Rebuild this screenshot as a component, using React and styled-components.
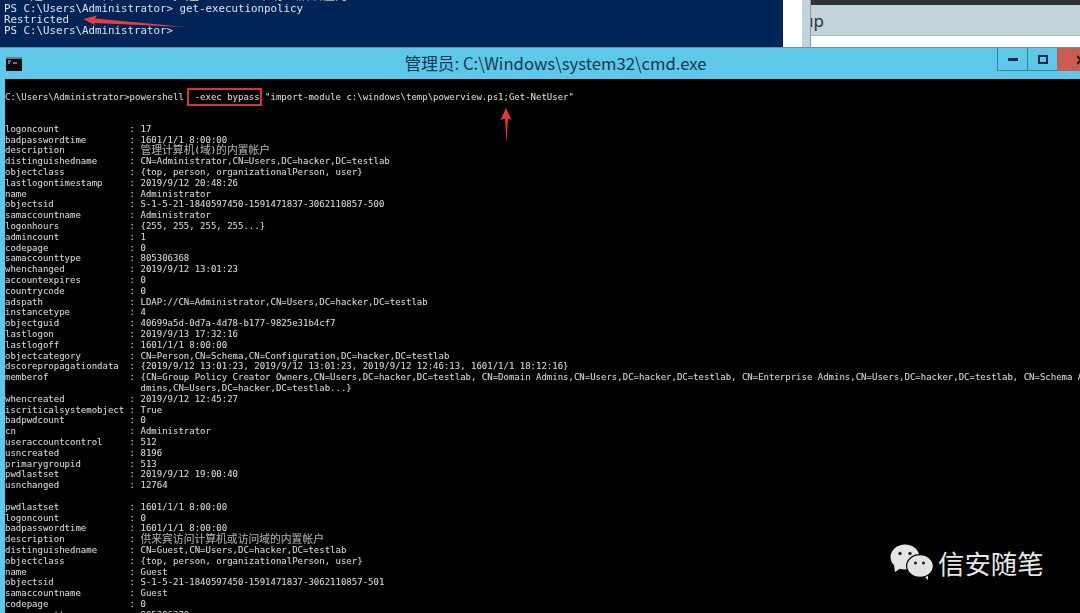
import styled, { createGlobalStyle } from "styled-components";

const GlobalStyle = createGlobalStyle`
	html, body {
		margin: 0;
		padding: 0;
		background: #000;
	}
`;

const ADMIN_GROUPS =
	"{CN=Group Policy Creator Owners,CN=Users,DC=hacker,DC=testlab, CN=Domain Admins,CN=Users,DC=hacker,DC=testlab, CN=Enterprise Admins,CN=Users,DC=hacker,DC=testlab, CN=Schema A";

const adminProps = [
	["logoncount", "17"],
	["badpasswordtime", "1601/1/1 8:00:00"],
	["description", "管理计算机(域)的内置帐户"],
	["distinguishedname", "CN=Administrator,CN=Users,DC=hacker,DC=testlab"],
	["objectclass", "{top, person, organizationalPerson, user}"],
	["lastlogontimestamp", "2019/9/12 20:48:26"],
	["name", "Administrator"],
	["objectsid", "S-1-5-21-1840597450-1591471837-3062110857-500"],
	["samaccountname", "Administrator"],
	["logonhours", "{255, 255, 255, 255...}"],
	["admincount", "1"],
	["codepage", "0"],
	["samaccounttype", "805306368"],
	["whenchanged", "2019/9/12 13:01:23"],
	["accountexpires", "0"],
	["countrycode", "0"],
	["adspath", "LDAP://CN=Administrator,CN=Users,DC=hacker,DC=testlab"],
	["instancetype", "4"],
	["objectguid", "40699a5d-0d7a-4d78-b177-9825e31b4cf7"],
	["lastlogon", "2019/9/13 17:32:16"],
	["lastlogoff", "1601/1/1 8:00:00"],
	["objectcategory", "CN=Person,CN=Schema,CN=Configuration,DC=hacker,DC=testlab"],
	["dscorepropagationdata", "{2019/9/12 13:01:23, 2019/9/12 13:01:23, 2019/9/12 12:46:13, 1601/1/1 18:12:16}"],
	["memberof", ADMIN_GROUPS],
	["", "dmins,CN=Users,DC=hacker,DC=testlab...}"],
	["whencreated", "2019/9/12 12:45:27"],
	["iscriticalsystemobject", "True"],
	["badpwdcount", "0"],
	["cn", "Administrator"],
	["useraccountcontrol", "512"],
	["usncreated", "8196"],
	["primarygroupid", "513"],
	["pwdlastset", "2019/9/12 19:00:40"],
	["usnchanged", "12764"],
];

const guestProps = [
	["pwdlastset", "1601/1/1 8:00:00"],
	["logoncount", "0"],
	["badpasswordtime", "1601/1/1 8:00:00"],
	["description", "供来宾访问计算机或访问域的内置帐户"],
	["distinguishedname", "CN=Guest,CN=Users,DC=hacker,DC=testlab"],
	["objectclass", "{top, person, organizationalPerson, user}"],
	["name", "Guest"],
	["objectsid", "S-1-5-21-1840597450-1591471837-3062110857-501"],
	["samaccountname", "Guest"],
	["codepage", "0"],
	["samaccounttype", "805306370"],
];

// console cells: a CJK glyph takes exactly two columns
function ConsoleText({ text }) {
	return text
		.split(/([\u4e00-\u9fff]+)/)
		.map((part, i) => (i % 2 ? <Cjk key={i}>{part}</Cjk> : part));
}

function PropBlock({ rows }) {
	return (
		<PropList>
			{rows.map(([key, value], i) => (
				<Line key={i}>
					{(key ? key.padEnd(23) + ": " : " ".repeat(25))}
					<ConsoleText text={value} />
				</Line>
			))}
		</PropList>
	);
}

function CmdIcon() {
	return (
		<svg width="16" height="14" viewBox="0 0 16 14">
			<rect width="16" height="14" fill="#0b0b0b" />
			<rect y="0" width="16" height="2" fill="#6d7d86" />
			<path d="M2 4h3M2 6h2M7 6h4" stroke="#d8d8d8" strokeWidth="1" />
		</svg>
	);
}

function WeChatLogo() {
	return (
		<svg width="44" height="38" viewBox="0 0 44 38">
			<path d="M4 21 L5 28 L11 24 Z" fill="#e4e4e4" />
			<ellipse cx="15" cy="13" rx="14.5" ry="12.5" fill="#e4e4e4" />
			<circle cx="10" cy="9.5" r="1.7" fill="#222" />
			<circle cx="20" cy="9.5" r="1.7" fill="#222" />
			<path d="M33 31 L38 36 L38 28 Z" fill="#e4e4e4" />
			<ellipse cx="30" cy="22" rx="13.4" ry="11.4" fill="#e4e4e4" stroke="#000" strokeWidth="1.2" />
			<circle cx="25.5" cy="19" r="1.5" fill="#222" />
			<circle cx="33.5" cy="19" r="1.5" fill="#222" />
		</svg>
	);
}

export default function App() {
	return (
		<Page>
			<GlobalStyle />
			<TopStrip>
				<PsPane>
					<PsLine $warn>
						<ConsoleText text={'[Y] 是(Y)  [N] 否(N)  [S] 挂起(S)  [?] 帮助 (默认值为"N"):'} />
					</PsLine>
					<PsLine>PS C:\Users\Administrator&gt; get-executionpolicy</PsLine>
					<PsLine>Restricted</PsLine>
					<PsLine>PS C:\Users\Administrator&gt;</PsLine>
				</PsPane>
				<WhiteGap />
				<SideEdge />
				<BackWindow>
					<BackTitle />
					<BackTab>
						<BackTabText>up</BackTabText>
					</BackTab>
					<BackBody />
				</BackWindow>
			</TopStrip>

			<CmdWindow>
				<TitleBar>
					<CmdIcon />
					<Title>管理员: C:\Windows\system32\cmd.exe</Title>
					<WinButtons>
						<WinButton>
							<svg width="10" height="4" viewBox="0 0 10 4">
								<rect width="10" height="3" y="1" fill="#0c2c44" />
							</svg>
						</WinButton>
						<WinButton>
							<svg width="10" height="9" viewBox="0 0 10 9">
								<rect x="1" y="1" width="8" height="7" fill="none" stroke="#0c2c44" strokeWidth="2" />
							</svg>
						</WinButton>
						<CloseButton>
							<svg width="3" height="10" viewBox="0 0 3 10">
								<path d="M0 1 L8 9 M8 1 L0 9" stroke="#2a1512" strokeWidth="2" />
							</svg>
						</CloseButton>
					</WinButtons>
				</TitleBar>
				<Console>
					<Line>
						C:\Users\Administrator&gt;powershell  <Marked>-exec bypass</Marked> "import-module c:\windows\temp\powerview.ps1;Get-NetUser"
					</Line>
					<Line />
					<Line />
					<PropBlock rows={adminProps} />
					<Line />
					<PropBlock rows={guestProps} />
				</Console>
			</CmdWindow>

			<Arrows viewBox="0 0 1080 613">
				<polygon points="83,19 97,15.5 95,18.5 186,27 94,23 96,25.5" fill="#e5403b" />
				<polygon points="506,108 511.5,120 508,118.5 506.5,143 505,118.5 500.5,120" fill="#e5353c" />
			</Arrows>

			<Watermark>
				<WeChatLogo />
				<WatermarkText>信安随笔</WatermarkText>
			</Watermark>
		</Page>
	);
}

const Page = styled.div`
	position: relative;
	width: 1080px;
	height: 613px;
	overflow: hidden;
	display: flex;
	flex-direction: column;
`;

const TopStrip = styled.div`
	height: 47px;
	display: flex;
	flex-shrink: 0;
`;

const PsPane = styled.div`
	width: 783px;
	height: 47px;
	background: #012456;
	overflow: hidden;
	display: flex;
	flex-direction: column;
	justify-content: flex-end;
	padding: 0 0 11px 4px;
	box-sizing: border-box;
	filter: blur(0.35px);
`;

const PsLine = styled.div`
	font-family: "DejaVu Sans Mono", "Noto Sans CJK SC", monospace;
	font-size: 10.8px;
	line-height: 11px;
	height: 11px;
	margin-bottom: ${(p) => (p.$warn ? "3px" : "0")};
	white-space: pre;
	flex-shrink: 0;
	color: ${(p) => (p.$warn ? "#e8e6b0" : "#dce4ea")};
`;

const WhiteGap = styled.div`
	width: 19px;
	background: #fff;
`;

const SideEdge = styled.div`
	width: 8px;
	background: #c3d3da;
`;

const BackWindow = styled.div`
	flex: 1;
	display: flex;
	flex-direction: column;
	border-left: 1px solid #8b9aa2;
`;

const BackTitle = styled.div`
	height: 5px;
	background: #333;
`;

const BackTab = styled.div`
	height: 30px;
	background: #c3d3da;
	border-bottom: 1px solid #aebbc1;
	overflow: hidden;
`;

const BackTabText = styled.div`
	margin-left: -8px;
	font-family: "Noto Sans", sans-serif;
	font-size: 17px;
	line-height: 31px;
	color: #2c3438;
`;

const BackBody = styled.div`
	flex: 1;
	background: #fff;
`;

const CmdWindow = styled.div`
	flex: 1;
	min-height: 0;
	display: flex;
	flex-direction: column;
	background: #5ec8ea;
	border-top: 1px solid #6c8fa3;
`;

const TitleBar = styled.div`
	height: 31px;
	flex-shrink: 0;
	display: flex;
	align-items: flex-start;
	padding-left: 6px;
	& > svg {
		margin-top: 9px;
		flex-shrink: 0;
	}
`;

const Title = styled.div`
	flex: 1;
	padding-left: 92px;
	text-align: center;
	font-family: "Noto Sans CJK SC", sans-serif;
	font-size: 16.7px;
	line-height: 30px;
	color: #15384c;
`;

const WinButtons = styled.div`
	display: flex;
	flex-shrink: 0;
`;

const WinButton = styled.div`
	width: 29px;
	height: 22px;
	display: flex;
	align-items: center;
	justify-content: center;
	border-left: 1px solid #3f7f9f;
	border-bottom: 1px solid #3f7f9f;
`;

const CloseButton = styled.div`
	width: 23px;
	height: 23px;
	background: #c85c50;
	display: flex;
	align-items: center;
	justify-content: flex-end;
`;

const Console = styled.div`
	flex: 1;
	min-height: 0;
	margin-left: 5px;
	padding-top: 12.5px;
	background: #000;
	overflow: hidden;
	position: relative;
	filter: blur(0.3px);
`;

const PropList = styled.div`
	display: flex;
	flex-direction: column;
`;

const Line = styled.div`
	height: 10.8px;
	line-height: 10.8px;
	font-family: "DejaVu Sans Mono", monospace;
	font-size: 9px;
	white-space: pre;
	color: #d4d4d4;
	text-shadow: 0 0 1px rgba(255, 255, 255, 0.25);
`;

const Cjk = styled.span`
	font-family: "Noto Sans CJK SC", sans-serif;
	font-size: 1.2em;
	line-height: 0;
	vertical-align: -1px;
	opacity: 0.8;
`;

const Marked = styled.span`
	position: relative;
	&::after {
		content: "";
		position: absolute;
		left: -8px;
		right: -2px;
		top: -4px;
		bottom: -4px;
		border: 2px solid #d9333a;
	}
`;

const Arrows = styled.svg`
	position: absolute;
	inset: 0;
	width: 1080px;
	height: 613px;
	pointer-events: none;
`;

const Watermark = styled.div`
	position: absolute;
	left: 890px;
	top: 544px;
	display: flex;
	align-items: center;
	gap: 4px;
`;

const WatermarkText = styled.div`
	font-family: "Noto Sans CJK SC", sans-serif;
	font-size: 26.4px;
	line-height: 38px;
	color: #e8e8e8;
`;
